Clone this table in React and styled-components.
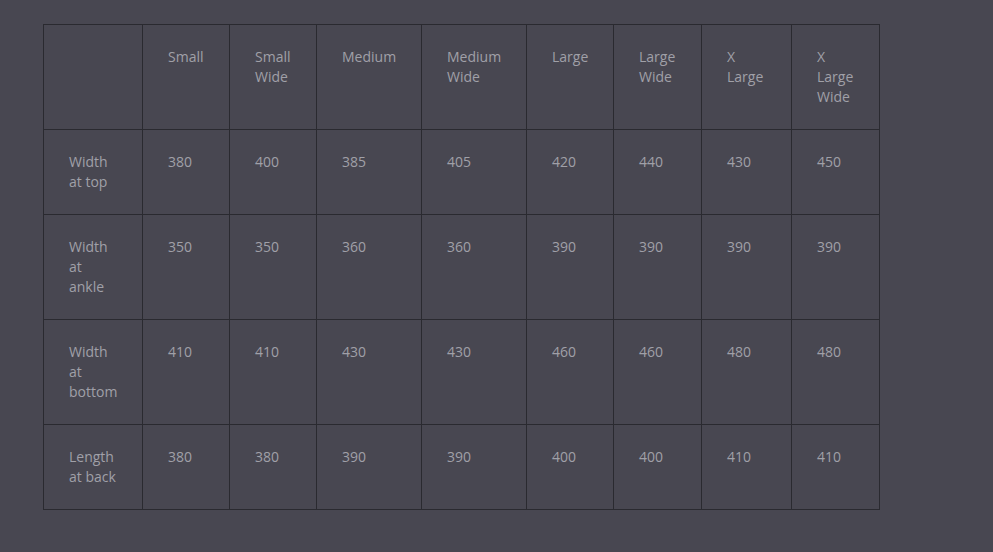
import styled, { createGlobalStyle } from "styled-components";

const GlobalStyle = createGlobalStyle`
    html, body {
        margin: 0;
        background-color: #484751;
    }
    body {
        font-family: "Open Sans", "Liberation Sans", sans-serif;
        font-size: 14px;
        color: #a0a0a8;
    }
`;

const sizes = ["Small", "Small Wide", "Medium", "Medium Wide", "Large", "Large Wide", "X Large", "X Large Wide"];
const widths = [99, 87, 87, 105, 105, 87, 88, 90, 88];

const rows = [
    { label: "Width at top", values: [380, 400, 385, 405, 420, 440, 430, 450] },
    { label: "Width at ankle", values: [350, 350, 360, 360, 390, 390, 390, 390] },
    { label: "Width at bottom", values: [410, 410, 430, 430, 460, 460, 480, 480] },
    { label: "Length at back", values: [380, 380, 390, 390, 400, 400, 410, 410] },
];

export default function App(){
    return(
        <Page>
            <GlobalStyle />
            <SizeTable>
                <colgroup>
                    {widths.map((w, i) => <col key={i} style={{ width: w }} />)}
                </colgroup>
                <thead>
                    <tr>
                        <Cell as="th"></Cell>
                        {sizes.map((size) => <Cell as="th" key={size}>{size}</Cell>)}
                    </tr>
                </thead>
                <tbody>
                    {rows.map(({label, values}) => (
                        <tr key={label}>
                            <Cell>{label}</Cell>
                            {values.map((v, i) => <Cell key={i}>{v}</Cell>)}
                        </tr>
                    ))}
                </tbody>
            </SizeTable>
        </Page>
    );
}

const Page = styled.main`
    padding: 24px 0 0 43px;
    min-height: 552px;
    box-sizing: border-box;
`;

const SizeTable = styled.table`
    border-collapse: collapse;
    table-layout: fixed;
    width: 836px;
`;

const Cell = styled.td`
    border: 1px solid #2a2a30;
    padding: 22px 25px 22px 25px;
    line-height: 20px;
    vertical-align: top;
    text-align: left;
    font-weight: 400;
`;
